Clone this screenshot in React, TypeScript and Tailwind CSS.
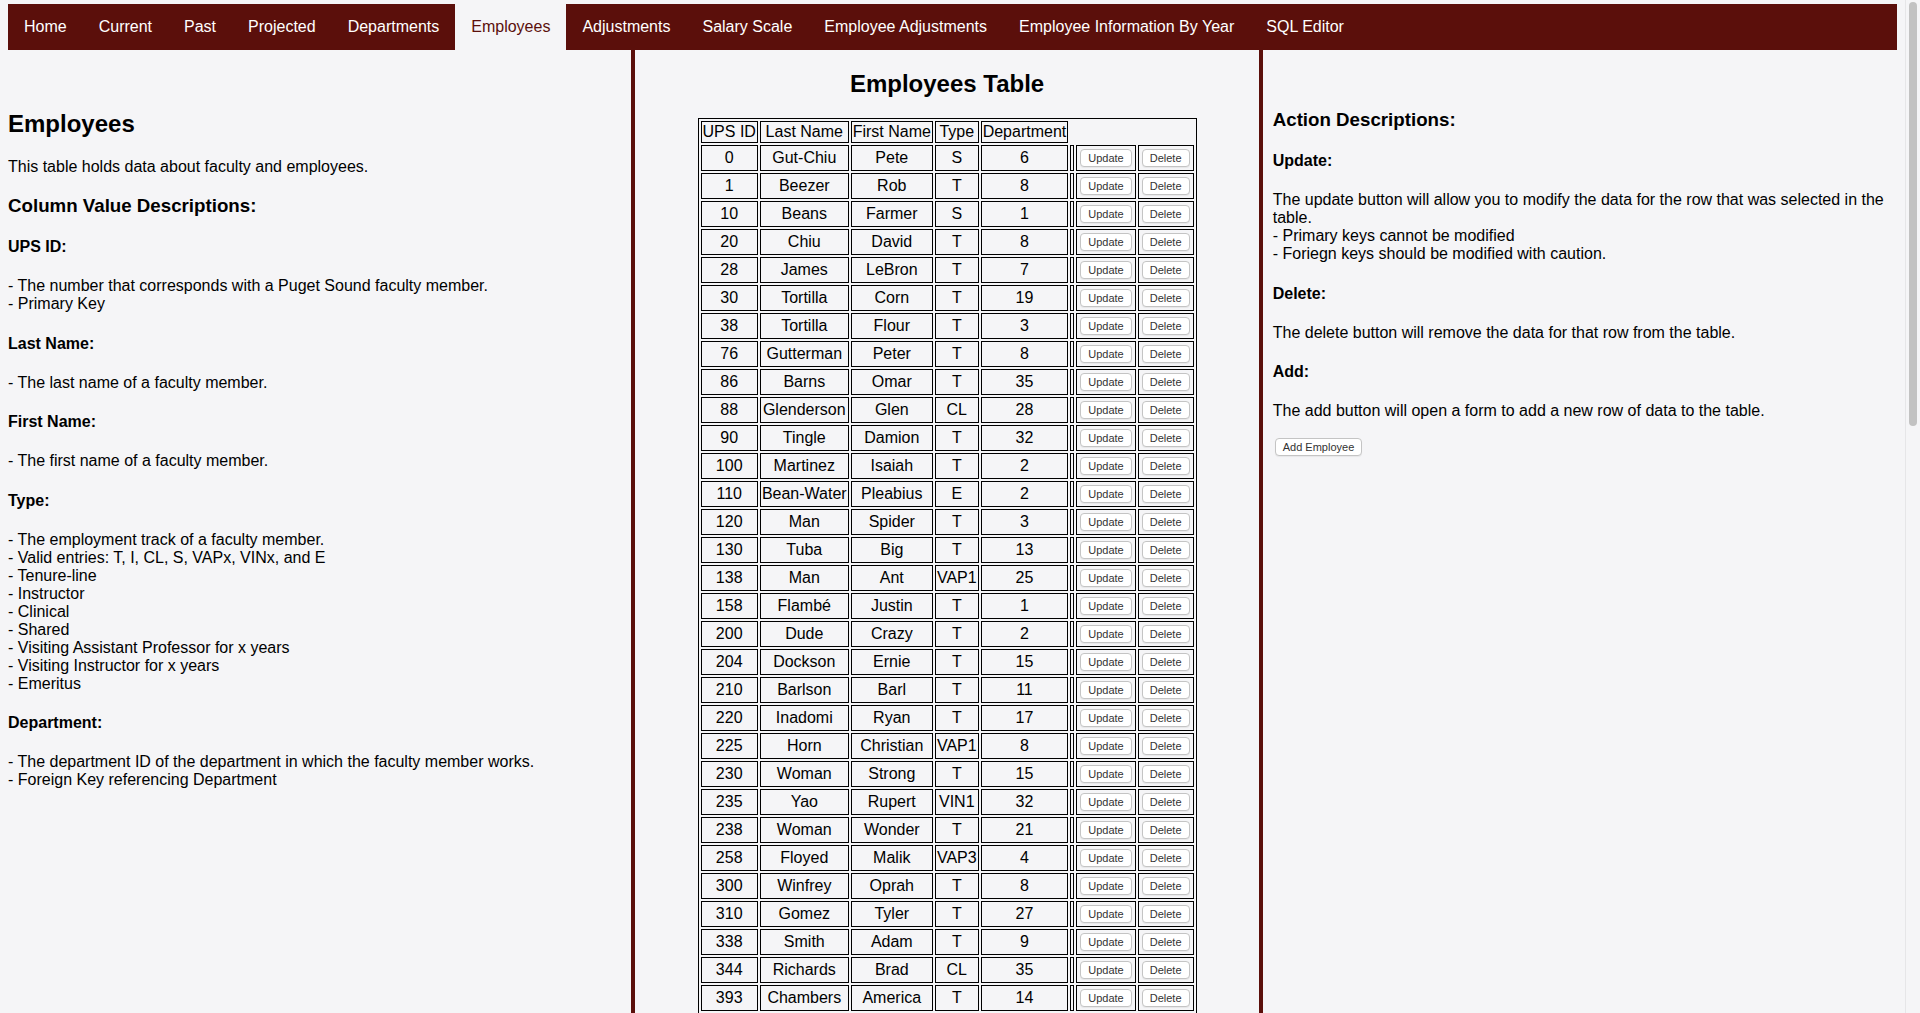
import React from "react";

const NAV = [
  "Home",
  "Current",
  "Past",
  "Projected",
  "Departments",
  "Employees",
  "Adjustments",
  "Salary Scale",
  "Employee Adjustments",
  "Employee Information By Year",
  "SQL Editor",
];

const ROWS: [number, string, string, string, number][] = [
  [0, "Gut-Chiu", "Pete", "S", 6],
  [1, "Beezer", "Rob", "T", 8],
  [10, "Beans", "Farmer", "S", 1],
  [20, "Chiu", "David", "T", 8],
  [28, "James", "LeBron", "T", 7],
  [30, "Tortilla", "Corn", "T", 19],
  [38, "Tortilla", "Flour", "T", 3],
  [76, "Gutterman", "Peter", "T", 8],
  [86, "Barns", "Omar", "T", 35],
  [88, "Glenderson", "Glen", "CL", 28],
  [90, "Tingle", "Damion", "T", 32],
  [100, "Martinez", "Isaiah", "T", 2],
  [110, "Bean-Water", "Pleabius", "E", 2],
  [120, "Man", "Spider", "T", 3],
  [130, "Tuba", "Big", "T", 13],
  [138, "Man", "Ant", "VAP1", 25],
  [158, "Flambé", "Justin", "T", 1],
  [200, "Dude", "Crazy", "T", 2],
  [204, "Dockson", "Ernie", "T", 15],
  [210, "Barlson", "Barl", "T", 11],
  [220, "Inadomi", "Ryan", "T", 17],
  [225, "Horn", "Christian", "VAP1", 8],
  [230, "Woman", "Strong", "T", 15],
  [235, "Yao", "Rupert", "VIN1", 32],
  [238, "Woman", "Wonder", "T", 21],
  [258, "Floyed", "Malik", "VAP3", 4],
  [300, "Winfrey", "Oprah", "T", 8],
  [310, "Gomez", "Tyler", "T", 27],
  [338, "Smith", "Adam", "T", 9],
  [344, "Richards", "Brad", "CL", 35],
  [393, "Chambers", "America", "T", 14],
  [400, "Baker", "Sam", "T", 5],
  [412, "Lopez", "Maria", "T", 12],
  [420, "Nguyen", "Linh", "S", 20],
  [431, "Carter", "Joe", "T", 6],
  [445, "Patel", "Ravi", "CL", 30],
  [452, "Olson", "Greta", "T", 9],
  [467, "Reed", "Nora", "T", 16],
  [480, "Young", "Ben", "VAP2", 3],
];

const btn =
  "my-[2px] mx-[2px] h-[18px] rounded-[4px] border border-[#c4c4c4] bg-white px-[7px] text-[11px] leading-[14px] text-[#333] shadow-[0_1px_1px_rgba(0,0,0,0.06)]";

const cell = "border border-black p-[1px] text-center align-middle";

export default function App() {
  return (
    <div className="min-h-screen bg-[#f5f5f7] pl-[8px] pr-[23px] pt-[4px] font-['Liberation_Sans',Arial,sans-serif] text-[16px] leading-[18px] text-black">
      {/* Top nav */}
      <nav className="flex bg-[#5b0f0b]">
        {NAV.map((n) => (
          <a
            key={n}
            href="#"
            className={
              n === "Employees"
                ? "bg-[#f5f5f7] px-[16px] py-[14px] text-[#5b0f0b]"
                : "px-[16px] py-[14px] text-white"
            }
          >
            {n}
          </a>
        ))}
      </nav>

      <div className="flex">
        {/* Left: column descriptions */}
        <div className="w-[33%] pt-[40px]">
          <h2 className="my-[20px] text-[24px] font-bold leading-[28px]">Employees</h2>
          <p className="my-[16px]">This table holds data about faculty and employees.</p>
          <h3 className="my-[18.72px] text-[18.72px] font-bold leading-[22px]">
            Column Value Descriptions:
          </h3>
          <h4 className="my-[21.28px] font-bold">UPS ID:</h4>
          <p className="my-[16px]">
            - The number that corresponds with a Puget Sound faculty member.
            <br />- Primary Key
          </p>
          <h4 className="my-[21.28px] font-bold">Last Name:</h4>
          <p className="my-[16px]">- The last name of a faculty member.</p>
          <h4 className="my-[21.28px] font-bold">First Name:</h4>
          <p className="my-[16px]">- The first name of a faculty member.</p>
          <h4 className="my-[21.28px] font-bold">Type:</h4>
          <p className="my-[16px]">
            - The employment track of a faculty member.
            <br />- Valid entries: T, I, CL, S, VAPx, VINx, and E
            <br />- Tenure-line
            <br />- Instructor
            <br />- Clinical
            <br />- Shared
            <br />- Visiting Assistant Professor for x years
            <br />- Visiting Instructor for x years
            <br />- Emeritus
          </p>
          <h4 className="my-[21.28px] font-bold">Department:</h4>
          <p className="my-[16px]">
            - The department ID of the department in which the faculty member works.
            <br />- Foreign Key referencing Department
          </p>
        </div>

        {/* Middle: table */}
        <div className="box-content w-[33%] border-x-4 border-[#5b0f0b]">
          <h2 className="my-[20px] text-center text-[24px] font-bold leading-[28px]">
            Employees Table
          </h2>
          <table className="mx-auto border-separate border-spacing-[2px] border border-black">
            <thead>
              <tr>
                <th className={cell + " font-normal"}>UPS ID</th>
                <th className={cell + " font-normal"}>Last Name</th>
                <th className={cell + " font-normal"}>First Name</th>
                <th className={cell + " font-normal"}>Type</th>
                <th className={cell + " font-normal"}>Department</th>
              </tr>
            </thead>
            <tbody>
              {ROWS.map(([id, last, first, type, dept]) => (
                <tr key={id}>
                  <td className={cell}>{id}</td>
                  <td className={cell}>{last}</td>
                  <td className={cell}>{first}</td>
                  <td className={cell}>{type}</td>
                  <td className={cell}>{dept}</td>
                  <td className={cell}></td>
                  <td className={cell}>
                    <button className={btn}>Update</button>
                  </td>
                  <td className={cell}>
                    <button className={btn}>Delete</button>
                  </td>
                </tr>
              ))}
            </tbody>
          </table>
        </div>

        {/* Right: actions */}
        <div className="w-[33%] pl-[10px] pt-[40px]">
          <h3 className="my-[18.72px] text-[18.72px] font-bold leading-[22px]">
            Action Descriptions:
          </h3>
          <h4 className="my-[21.28px] font-bold">Update:</h4>
          <p className="my-[16px]">
            The update button will allow you to modify the data for the row that was selected in
            the table.
            <br />- Primary keys cannot be modified
            <br />- Foriegn keys should be modified with caution.
          </p>
          <h4 className="my-[21.28px] font-bold">Delete:</h4>
          <p className="my-[16px]">The delete button will remove the data for that row from the table.</p>
          <h4 className="my-[21.28px] font-bold">Add:</h4>
          <p className="my-[16px]">The add button will open a form to add a new row of data to the table.</p>
          <button className={btn}>Add Employee</button>
        </div>
      </div>

      {/* page scrollbar */}
      <div className="fixed right-0 top-0 h-screen w-[15px] border-l border-[#e6e6e8] bg-[#f5f5f7]">
        <div className="ml-[3px] mt-[2px] h-[424px] w-[8px] rounded-full bg-[#c2c2c2]" />
      </div>
    </div>
  );
}
